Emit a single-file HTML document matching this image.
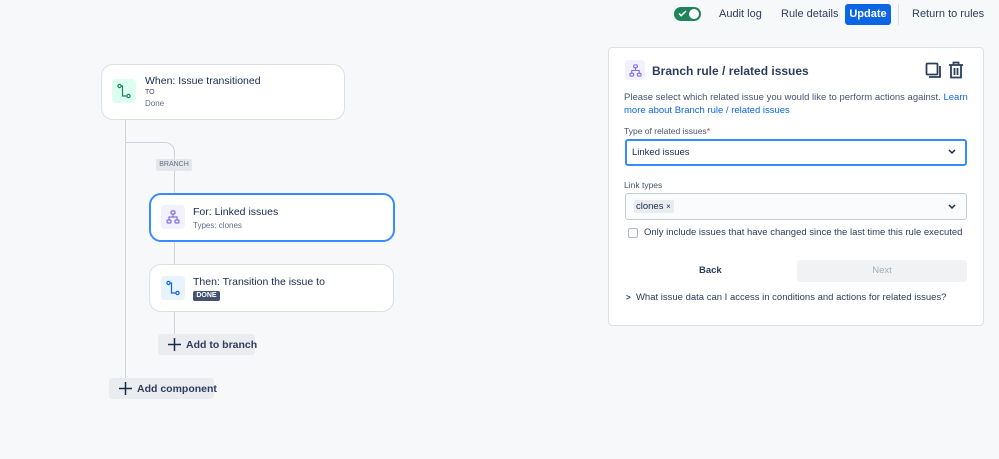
<!DOCTYPE html>
<html><head><style>
*{box-sizing:border-box;margin:0;padding:0}
body{width:999px;height:459px;background:#f7f8f9;font-family:"Liberation Sans",sans-serif;color:#172b4d;position:relative;overflow:hidden}
.a{position:absolute}
.card{position:absolute;background:#fff;border:1px solid #dcdfe4;border-radius:12px}
.ic{position:absolute;width:24px;height:24px;border-radius:4px;display:flex;align-items:center;justify-content:center}
.t{position:absolute;font-size:10px;white-space:nowrap}
.line{position:absolute;background:#d0d4da}
.btn{position:absolute;background:#ebecf0;border-radius:3px;font-size:10.5px;font-weight:bold;color:#2c3e5d;display:flex;align-items:center;gap:5px;padding-left:10px;white-space:nowrap}
.btn svg{flex-shrink:0}
.inp{position:absolute;left:625px;width:342px;height:27px;border:1px solid #c7cbd1;border-radius:3px;background:#fafbfc}
</style></head><body>
<div class="a" style="left:674px;top:7px;width:27px;height:14px;border-radius:7px;background:#1f845a"></div>
<div class="a" style="left:689px;top:9px;width:10px;height:10px;border-radius:5px;background:#fff"></div>
<svg class="a" style="left:678px;top:9px" width="9" height="9" viewBox="0 0 9 9"><path d="M1 4.5l2.2 2.2L8 2" stroke="#fff" stroke-width="1.5" fill="none"/></svg>
<div class="t" style="left:719px;top:8px;font-size:11px;color:#2c3e5d">Audit log</div>
<div class="t" style="left:781px;top:8px;font-size:11px;color:#2c3e5d">Rule details</div>
<div class="a" style="left:845px;top:4px;width:46px;height:21px;background:#0c66e4;border-radius:3px;color:#fff;font-size:11px;font-weight:bold;text-align:center;line-height:21px">Update</div>
<div class="a" style="left:898px;top:4px;width:1px;height:21px;background:#dcdfe4"></div>
<div class="t" style="left:912px;top:8px;font-size:11px;color:#2c3e5d">Return to rules</div>

<div class="line" style="left:125px;top:119px;width:1px;height:260px"></div>
<div class="a" style="left:125px;top:142px;width:50px;height:30px;border-top:1px solid #d0d4da;border-right:1px solid #d0d4da;border-top-right-radius:10px"></div>
<div class="line" style="left:174px;top:171px;width:1px;height:22px"></div>
<div class="a" style="left:156px;top:159px;width:36px;height:12px;background:#e4e6ea;border-radius:2px;font-size:7px;color:#626f86;text-align:center;line-height:12px">BRANCH</div>
<div class="line" style="left:174px;top:241px;width:1px;height:23px"></div>
<div class="line" style="left:174px;top:311px;width:1px;height:23px"></div>

<div class="card" style="left:101px;top:64px;width:244px;height:56px"></div>
<div class="ic" style="left:112px;top:79px;background:#dcfff1"><svg width="16" height="16" viewBox="0 0 16 16"><circle cx="3.5" cy="3" r="1.6" fill="none" stroke="#1f845a" stroke-width="1.2"/><circle cx="12.5" cy="13" r="1.6" fill="none" stroke="#1f845a" stroke-width="1.2"/><path d="M5 3h1.5v10H11" fill="none" stroke="#1f845a" stroke-width="1.2"/></svg></div>
<div class="t" style="left:145px;top:75px;font-size:10.5px">When: Issue transitioned</div>
<div class="t" style="left:145px;top:89px;font-size:7px;color:#44546f">TO</div>
<div class="t" style="left:145px;top:99px;font-size:8px;color:#626f86">Done</div>

<div class="card" style="left:149px;top:193px;width:246px;height:49px;border:2px solid #388bff"></div>
<div class="ic" style="left:161px;top:205px;background:#f3f0ff"><svg width="14" height="14" viewBox="0 0 14 14" fill="none" stroke="#8270db" stroke-width="1.2"><rect x="5" y="1" width="4" height="3" rx="1"/><rect x="1" y="10" width="4" height="3" rx="1"/><rect x="9" y="10" width="4" height="3" rx="1"/><path d="M7 4v3M3 10V7h8v3"/></svg></div>
<div class="t" style="left:193px;top:206px;font-size:10.5px">For: Linked issues</div>
<div class="t" style="left:193px;top:221px;font-size:8px;color:#626f86">Types: clones</div>

<div class="card" style="left:149px;top:264px;width:245px;height:48px"></div>
<div class="ic" style="left:161px;top:276px;background:#e9f2ff"><svg width="16" height="16" viewBox="0 0 16 16"><circle cx="3.5" cy="3" r="1.6" fill="none" stroke="#0c66e4" stroke-width="1.2"/><circle cx="12.5" cy="13" r="1.6" fill="none" stroke="#0c66e4" stroke-width="1.2"/><path d="M5 3h1.5v10H11" fill="none" stroke="#0c66e4" stroke-width="1.2"/></svg></div>
<div class="t" style="left:193px;top:276px;font-size:10.5px">Then: Transition the issue to</div>
<div class="a" style="left:193px;top:291px;width:27px;height:10px;background:#44546f;border-radius:2px;color:#fff;font-size:7px;font-weight:bold;text-align:center;line-height:10px">DONE</div>

<div class="btn" style="left:158px;top:334px;width:97px;height:21px"><svg width="13" height="13" viewBox="0 0 13 13"><path d="M6.5 0v13M0 6.5h13" stroke="#172b4d" stroke-width="1.5"/></svg>Add to branch</div>
<div class="btn" style="left:109px;top:378px;width:105px;height:21px"><svg width="13" height="13" viewBox="0 0 13 13"><path d="M6.5 0v13M0 6.5h13" stroke="#172b4d" stroke-width="1.5"/></svg>Add component</div>

<div class="a" style="left:608px;top:47px;width:376px;height:279px;background:#fff;border:1px solid #dcdfe4;border-radius:4px"></div>
<div class="a" style="left:625px;top:60px;width:20px;height:20px;border-radius:4px;background:#f3f0ff;display:flex;align-items:center;justify-content:center"><svg width="13" height="13" viewBox="0 0 14 14" fill="none" stroke="#8270db" stroke-width="1.2"><rect x="5" y="1" width="4" height="3" rx="1"/><rect x="1" y="10" width="4" height="3" rx="1"/><rect x="9" y="10" width="4" height="3" rx="1"/><path d="M7 4v3M3 10V7h8v3"/></svg></div>
<div class="t" style="left:652px;top:64px;font-size:12px;font-weight:bold;color:#2c3e5d">Branch rule / related issues</div>
<svg class="a" style="left:925px;top:62px" width="17" height="17" viewBox="0 0 17 17" fill="none" stroke="#2c3e5d" stroke-width="1.8"><rect x="1.5" y="1.5" width="11" height="11" rx="1"/><path d="M15 4v11H4"/></svg>
<svg class="a" style="left:948px;top:61px" width="16" height="18" viewBox="0 0 16 18" fill="none" stroke="#2c3e5d" stroke-width="1.8"><path d="M1 4h14M5.5 4V1.5h5V4M3 4v12.5h10V4M6.5 7v7M9.5 7v7"/></svg>
<div class="t" style="left:624px;top:92px;font-size:9.5px;color:#44546f">Please select which related issue you would like to perform actions against. <span style="color:#0c66e4">Learn</span></div>
<div class="t" style="left:624px;top:105px;font-size:9.5px;color:#0c66e4">more about Branch rule / related issues</div>
<div class="t" style="left:624px;top:126px;font-size:8.5px;color:#44546f">Type of related issues<span style="color:#c9372c">*</span></div>
<div class="inp" style="top:139px;border:2px solid #388bff;background:#fff"></div>
<div class="t" style="left:632px;top:147px;font-size:9.5px">Linked issues</div>
<svg class="a" style="left:948px;top:149px" width="8" height="6" viewBox="0 0 8 6"><path d="M1 1l3 3 3-3" stroke="#172b4d" stroke-width="1.5" fill="none"/></svg>
<div class="t" style="left:624px;top:180px;font-size:8.5px;color:#44546f">Link types</div>
<div class="inp" style="top:193px"></div>
<div class="a" style="left:634px;top:200px;width:40px;height:13px;background:#e9ebee;border-radius:2px;font-size:9.5px;padding-left:2px;line-height:13px">clones <span style="font-size:8px">×</span></div>
<svg class="a" style="left:948px;top:204px" width="8" height="6" viewBox="0 0 8 6"><path d="M1 1l3 3 3-3" stroke="#172b4d" stroke-width="1.5" fill="none"/></svg>
<div class="a" style="left:628px;top:228px;width:10px;height:10px;border:1px solid #b3b9c4;border-radius:2px;background:#fafbfc"></div>
<div class="t" style="left:644px;top:227px;font-size:9.5px;color:#2c3e5d">Only include issues that have changed since the last time this rule executed</div>
<div class="t" style="left:699px;top:265px;font-size:9.5px;font-weight:bold;color:#2c3e5d">Back</div>
<div class="a" style="left:797px;top:260px;width:170px;height:22px;background:#f1f2f4;border-radius:3px;font-size:9.5px;color:#a5adba;text-align:center;line-height:22px">Next</div>
<div class="t" style="left:626px;top:292px;font-size:9.5px;color:#2c3e5d"><b style="font-size:8px">&gt;</b>&nbsp; What issue data can I access in conditions and actions for related issues?</div>
</body></html>
